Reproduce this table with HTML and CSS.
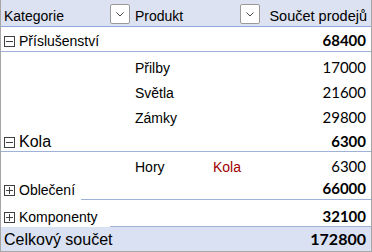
FILE: index.html
```html
<!DOCTYPE html>
<html lang="cs">
<head>
    <meta charset="UTF-8">
    <meta name="viewport" content="width=device-width, initial-scale=1.0">
    <title>Kontingenční tabulka</title>
    <link rel="stylesheet" href="styles.css">
</head>
<body>

    <div class="pivot">

        <!-- Header -->
        <div class="head">
            <div class="hcell hcell-cat">
                <span>Kategorie</span>
                <span class="dd"><svg width="8" height="5" viewBox="0 0 8 5"><path d="M0.5 0.5 L4 4 L7.5 0.5" fill="none" stroke="#444" stroke-width="1"/></svg></span>
            </div>
            <div class="hcell hcell-prod">
                <span>Produkt</span>
                <span class="dd"><svg width="8" height="5" viewBox="0 0 8 5"><path d="M0.5 0.5 L4 4 L7.5 0.5" fill="none" stroke="#444" stroke-width="1"/></svg></span>
            </div>
            <div class="hcell hcell-sum">Součet prodejů</div>
        </div>

        <!-- Příslušenství -->
        <div class="row grp r-pris">
            <div class="lbl"><span class="tog minus"></span>Příslušenství</div>
            <div class="val bold">68400</div>
        </div>
        <div class="row r-prilby">
            <div class="prod">Přilby</div>
            <div class="val">17000</div>
        </div>
        <div class="row r-svetla">
            <div class="prod">Světla</div>
            <div class="val">21600</div>
        </div>
        <div class="row r-zamky">
            <div class="prod">Zámky</div>
            <div class="val">29800</div>
        </div>

        <!-- Kola -->
        <div class="row grp r-kola">
            <div class="lbl big"><span class="tog minus"></span>Kola</div>
            <div class="val bold">6300</div>
        </div>
        <div class="row r-hory">
            <div class="prod">Hory</div>
            <div class="cat2">Kola</div>
            <div class="val">6300</div>
        </div>

        <!-- Collapsed -->
        <div class="row grp r-obl">
            <div class="lbl mask mask-obl"><span class="tog plus"></span>Oblečení</div>
            <div class="val bold">66000</div>
        </div>
        <div class="row grp r-komp">
            <div class="lbl mask mask-komp"><span class="tog plus"></span>Komponenty</div>
            <div class="val bold">32100</div>
        </div>

        <!-- Grand total -->
        <div class="row total">
            <div class="lbl big">Celkový součet</div>
            <div class="val bold big-num">172800</div>
        </div>

    </div>

</body>
</html>
```

FILE: styles.css
```css
body {
    margin: 0;
    font-family: "Liberation Sans", Arial, sans-serif;
    font-size: 14px;
    color: #000;
    background: #fff;
}

.pivot {
    width: 372px;
    height: 252px;
    box-sizing: border-box;
    border: 1px solid #a6a6a6;
    border-top: none;
}

/* header */
.head {
    display: flex;
    height: 27px;
    box-sizing: border-box;
    background-color: #dce2f1;
    border-bottom: 1px solid #8ea9db;
    line-height: 18px;
}

.hcell {
    display: flex;
    align-items: flex-end;
    justify-content: space-between;
    padding-bottom: 1px;
}

.hcell-cat {
    width: 134px;
    box-sizing: border-box;
    padding-left: 3px;
    padding-right: 5px;
}

.hcell-prod {
    width: 131px;
    box-sizing: border-box;
    padding-right: 6px;
}

.hcell-sum {
    flex: 1;
    justify-content: flex-end;
    padding-right: 4px;
    font-size: 14.5px;
}

.dd {
    align-self: flex-start;
    margin-top: 4px;
    width: 20px;
    height: 20px;
    box-sizing: border-box;
    border: 1px solid #9a9a9a;
    border-radius: 2px;
    background: #fff;
    display: flex;
    align-items: center;
    justify-content: center;
}

/* rows */
.row {
    display: flex;
    align-items: flex-end;
    box-sizing: border-box;
    line-height: 18px;
    padding-bottom: 1px;
    padding-right: 5px;
}

.grp {
    border-bottom: 1px solid #9fb1d9;
}

.r-pris { height: 25px; }
.r-prilby { height: 26px; }
.r-svetla { height: 25px; }
.r-zamky { height: 25px; }
.r-kola { height: 24px; padding-bottom: 0; }
.r-hory { height: 25px; }
.r-obl { height: 23px; }
.r-komp { height: 27px; padding-bottom: 0; }

.lbl {
    padding-left: 3px;
    white-space: nowrap;
}

.lbl.big {
    font-size: 16px;
}

.mask {
    background: #fff;
    align-self: stretch;
    display: flex;
    align-items: flex-end;
    margin-bottom: -2px;
    padding-bottom: 1px;
}

.r-komp .mask {
    margin-bottom: -1px;
}

.mask-obl { width: 80px; box-sizing: border-box; }
.mask-komp { width: 109px; box-sizing: border-box; }

.tog {
    display: inline-block;
    position: relative;
    width: 11px;
    height: 11px;
    box-sizing: border-box;
    border: 1px solid #404040;
    margin-right: 4px;
    vertical-align: -1px;
    align-self: flex-end;
    margin-bottom: 3px;
    flex-shrink: 0;
}

.lbl:not(.mask) .tog {
    margin-bottom: 0;
}

.tog::before,
.tog.plus::after {
    content: "";
    position: absolute;
    background: #404040;
}

.tog::before {
    left: 1px;
    right: 1px;
    top: 4px;
    height: 1px;
}

.tog.plus::after {
    top: 1px;
    bottom: 1px;
    left: 4px;
    width: 1px;
}

.prod {
    margin-left: 134px;
    width: 78px;
}

.cat2 {
    color: #a00000;
}

.val {
    margin-left: auto;
    font-family: Lato, "Liberation Sans", sans-serif;
    font-size: 15px;
    padding-bottom: 1px;
}

.bold {
    font-weight: 700;
}

.total {
    height: 24px;
    background-color: #d9e1f2;
    padding-bottom: 2px;
}

.big-num {
    font-size: 16px;
}
```
